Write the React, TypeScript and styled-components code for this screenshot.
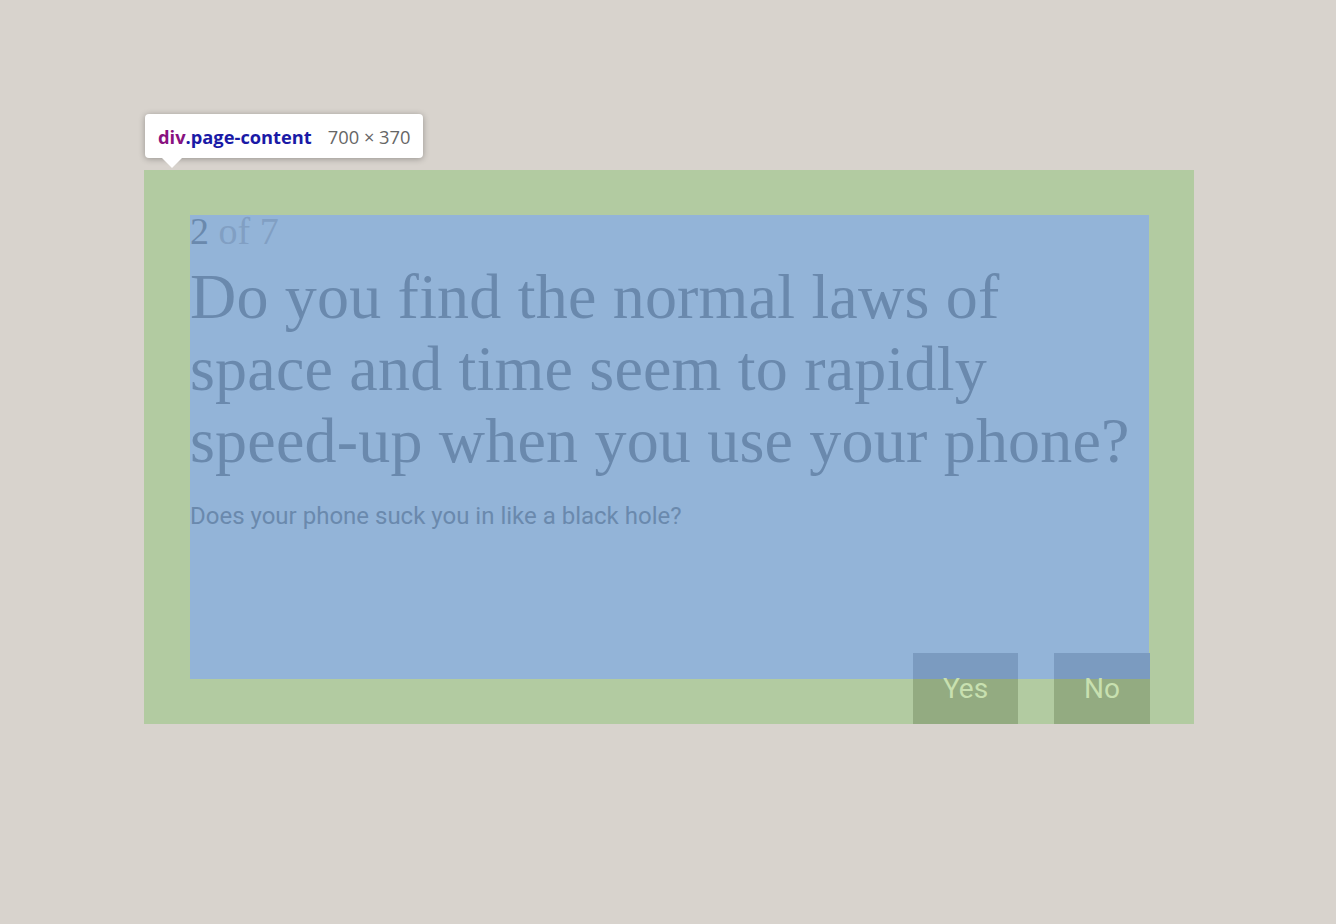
import React from "react";
import styled, { createGlobalStyle } from "styled-components";

const Global = createGlobalStyle`
  html, body { margin: 0; padding: 0; background: #d8d3cd; }
  body { width: 1336px; height: 924px; overflow: hidden; }
`;

const Stage = styled.div`
  padding: 170px 0 0 144px;
  position: relative;
`;

const PageContent = styled.div`
  position: relative;
  box-sizing: border-box;
  width: 1050px;
  height: 554px;
  padding: 45px 45px 45px 46px;
  background: #b2cba1;
`;

const Content = styled.div`
  box-sizing: border-box;
  height: 100%;
  background: #93b4d8;
  display: flex;
  flex-direction: column;
`;

const Counter = styled.div`
  font-family: "Liberation Serif", serif;
  font-size: 38px;
  line-height: 33px;
  color: #819fc3;
`;

const Current = styled.span`
  color: #6a89ad;
`;

const Heading = styled.h1`
  margin: 13px 0 0;
  font-family: "Liberation Serif", serif;
  font-weight: 400;
  font-size: 64px;
  line-height: 72px;
  letter-spacing: 0.2px;
  color: #6a89ad;
`;

const Sub = styled.p`
  margin: 25px 0 0;
  font-family: Roboto, sans-serif;
  font-size: 24px;
  color: #6a89ad;
`;

const Actions = styled.div`
  margin-top: auto;
  margin-bottom: -45px;
  margin-right: -1px;
  display: flex;
  justify-content: flex-end;
  gap: 36px;
`;

const Button = styled.button<{ $w: number }>`
  width: ${(p) => p.$w}px;
  height: 71px;
  border: 0;
  padding: 0;
  background: linear-gradient(to bottom, #7b9bc0 0, #7b9bc0 26px, #93ab81 26px, #93ab81 100%);
  font-family: Roboto, sans-serif;
  font-size: 28px;
  color: #c8e0b0;
`;

const Tip = styled.div`
  position: absolute;
  left: 145px;
  top: 114px;
  height: 44px;
  box-sizing: border-box;
  padding: 0 13px;
  display: flex;
  align-items: center;
  gap: 16px;
  background: #fff;
  border-radius: 4px;
  box-shadow: 0 1px 6px rgba(0, 0, 0, 0.3);
  font-family: "Open Sans", sans-serif;
  font-size: 18.3px;
  white-space: nowrap;
  &::after {
    content: "";
    position: absolute;
    left: 17px;
    bottom: -10px;
    border-left: 10px solid transparent;
    border-right: 10px solid transparent;
    border-top: 10px solid #fff;
  }
`;

const Tag = styled.span`
  font-weight: 700;
  color: #1a1aa6;
`;

const TagName = styled.span`
  color: #881280;
`;

const Dim = styled.span`
  color: #666;
`;

export default function App() {
  return (
    <>
      <Global />
      <Stage>
        <Tip>
          <Tag>
            <TagName>div</TagName>.page-content
          </Tag>
          <Dim>700 × 370</Dim>
        </Tip>
        <PageContent>
          <Content>
            <Counter>
              <Current>2</Current> of 7
            </Counter>
            <Heading>
              Do you find the normal laws of space and time seem to rapidly speed-up when you use your phone?
            </Heading>
            <Sub>Does your phone suck you in like a black hole?</Sub>
            <Actions>
              <Button $w={105}>Yes</Button>
              <Button $w={96}>No</Button>
            </Actions>
          </Content>
        </PageContent>
      </Stage>
    </>
  );
}
